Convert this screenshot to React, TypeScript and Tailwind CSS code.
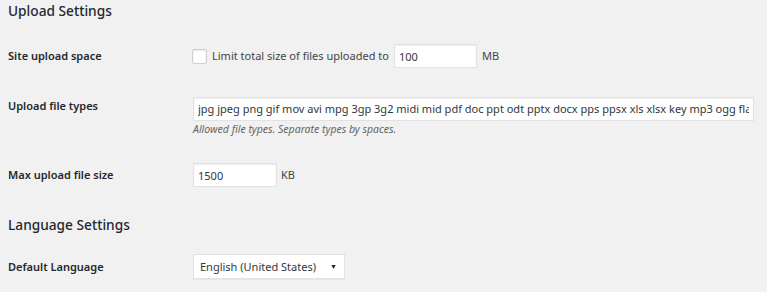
const FILE_TYPES =
  'jpg jpeg png gif mov avi mpg 3gp 3g2 midi mid pdf doc ppt odt pptx docx pps ppsx xls xlsx key mp3 ogg flac m4a wav mp4 m4v webm ogv flv';

const font = { fontFamily: '"Noto Sans", "Open Sans", sans-serif' };

const inputCls =
  'h-[24px] bg-white border border-[#e2e2e2] shadow-[inset_0_1px_2px_rgba(0,0,0,0.07)] px-[4px] text-[11px] text-[#32373c] outline-none';

function Label({ children }: { children: React.ReactNode }) {
  return <div className="text-[11px] font-semibold text-[#23282d]">{children}</div>;
}

export default function App() {
  return (
    <div className="w-[767px] h-[292px] overflow-hidden bg-[#f1f1f1] text-[#444]" style={font}>
      <h2 className="pl-[8px] text-[13.7px] font-medium text-[#23282d] leading-[22px]">Upload Settings</h2>

      {/* Site upload space */}
      <div className="mt-[22px] grid grid-cols-[192px_1fr] items-center">
        <div className="pl-[8px]">
          <Label>Site upload space</Label>
        </div>
        <div className="flex items-center">
          <span className="w-[15px] h-[15px] rounded-[2px] bg-white border border-[#cfcfcf] shadow-[inset_0_1px_2px_rgba(0,0,0,0.1)]" />
          <span className="ml-[5px] text-[11px] text-[#444]">Limit total size of files uploaded to</span>
          <input className={`${inputCls} ml-[5px] w-[83px]`} defaultValue="100" />
          <span className="ml-[5px] text-[11px] text-[#444]">MB</span>
        </div>
      </div>

      {/* Upload file types */}
      <div className="mt-[27px] grid grid-cols-[193px_1fr] items-start">
        <div className="pl-[8px] pt-[3px]">
          <Label>Upload file types</Label>
        </div>
        <div className="pr-[13px]">
          <input className={`${inputCls} w-full`} defaultValue={FILE_TYPES} />
          <p className="mt-[1px] text-[10.5px] italic text-[#666]">Allowed file types. Separate types by spaces.</p>
        </div>
      </div>

      {/* Max upload file size */}
      <div className="mt-[26px] grid grid-cols-[193px_1fr] items-center">
        <div className="pl-[8px]">
          <Label>Max upload file size</Label>
        </div>
        <div className="flex items-center">
          <input className={`${inputCls} w-[84px]`} defaultValue="1500" />
          <span className="ml-[4px] text-[11px] text-[#444]">KB</span>
        </div>
      </div>

      <h2 className="mt-[27px] pl-[8px] text-[13.7px] font-medium text-[#23282d] leading-[22px]">Language Settings</h2>

      {/* Default Language */}
      <div className="mt-[18px] grid grid-cols-[193px_1fr] items-center">
        <div className="pl-[8px]">
          <Label>Default Language</Label>
        </div>
        <div className="flex">
          <div className="h-[25px] w-[152px] bg-white border border-[#e2e2e2] shadow-[0_1px_1px_rgba(0,0,0,0.04)] flex items-center justify-between pl-[6px] pr-[7px]">
            <span className="text-[11px] text-[#32373c]">English (United States)</span>
            <span className="text-[7px] text-[#222]">▼</span>
          </div>
        </div>
      </div>
    </div>
  );
}
